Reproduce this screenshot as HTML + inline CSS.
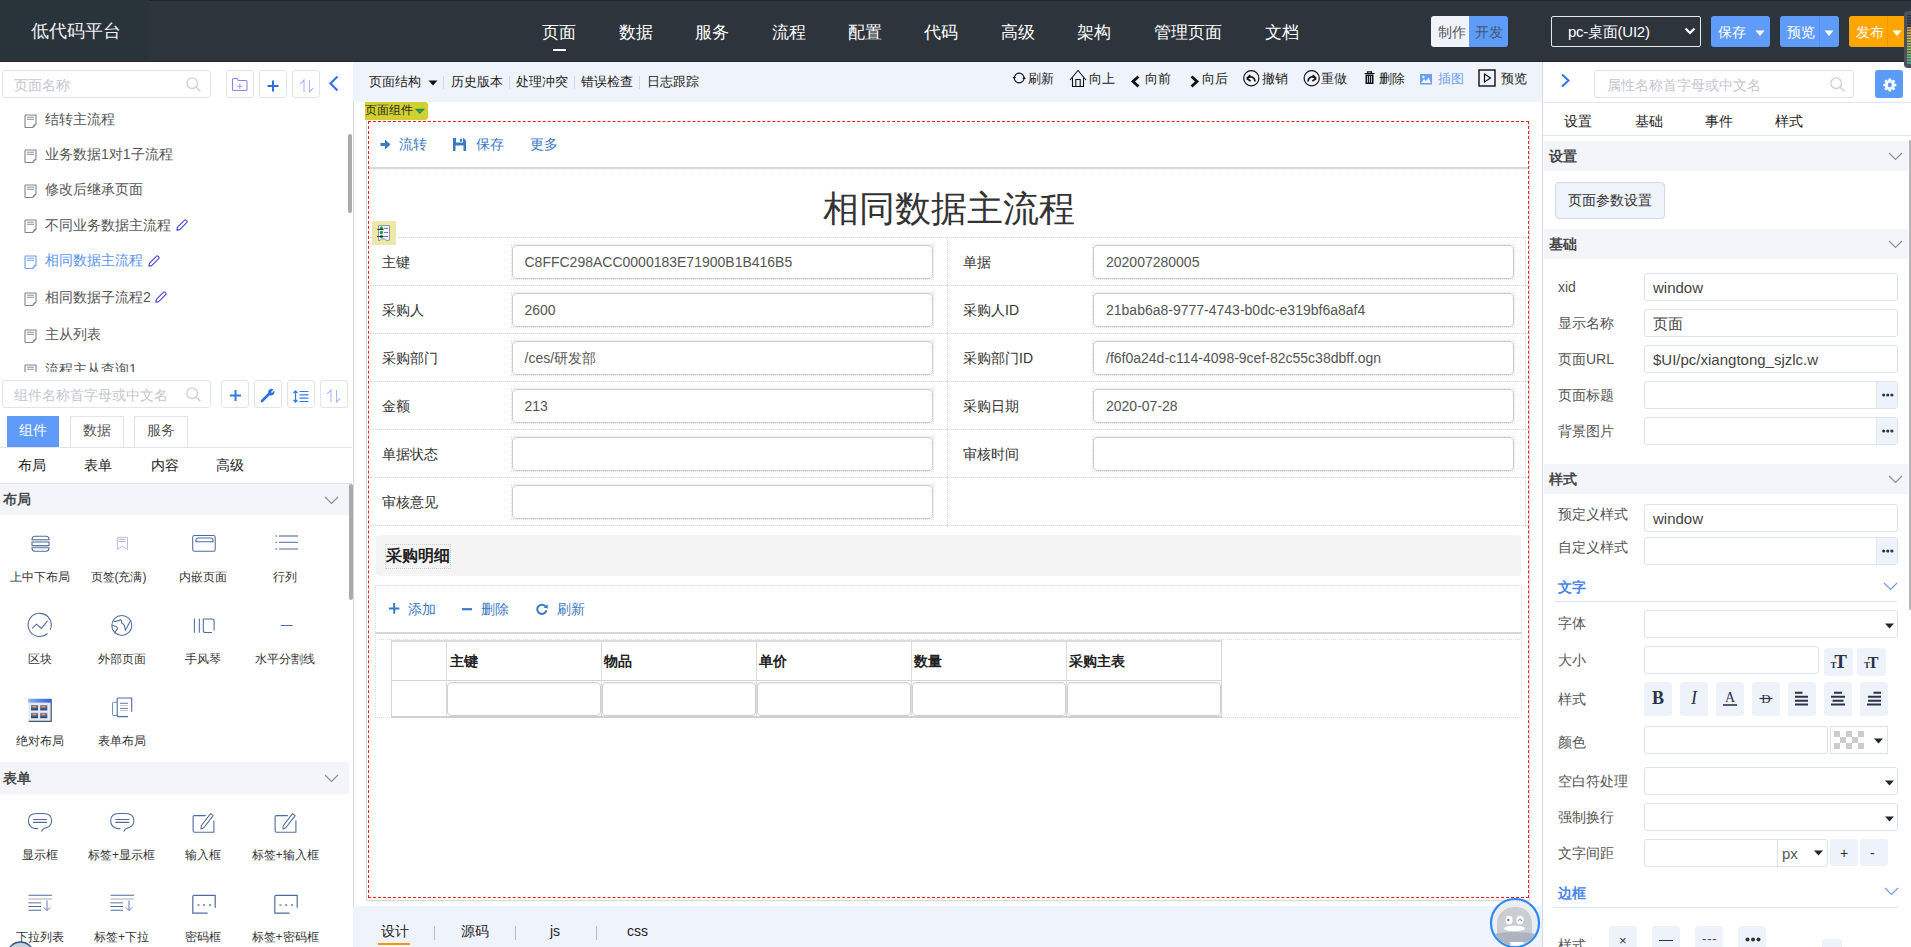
<!DOCTYPE html><html><head><meta charset="utf-8"><style>
*{box-sizing:border-box}
html,body{margin:0;padding:0;width:1911px;height:947px;overflow:hidden;background:#fff;font-family:"Liberation Sans",sans-serif}
.t{position:absolute;white-space:nowrap}
.r{position:absolute;display:block}
</style></head><body><div class="r" style="left:0px;top:0px;width:1911px;height:62px;background:#2e343b"></div>
<div class="r" style="left:0px;top:0px;width:149px;height:62px;background:#29333a"></div>
<div class="r" style="left:149px;top:0px;width:1762px;height:1px;background:#202328"></div>
<div class="r" style="left:0px;top:61px;width:1911px;height:1px;background:#23272e"></div>
<div class="t" style="left:31px;top:21.0px;font-size:18px;line-height:20px;color:#eef0f2;font-weight:normal;">低代码平台</div>
<div class="t" style="left:542px;top:22.5px;font-size:17px;line-height:20px;color:#ffffff;font-weight:normal;">页面</div>
<div class="t" style="left:619px;top:22.5px;font-size:17px;line-height:20px;color:#ffffff;font-weight:normal;">数据</div>
<div class="t" style="left:695px;top:22.5px;font-size:17px;line-height:20px;color:#ffffff;font-weight:normal;">服务</div>
<div class="t" style="left:772px;top:22.5px;font-size:17px;line-height:20px;color:#ffffff;font-weight:normal;">流程</div>
<div class="t" style="left:848px;top:22.5px;font-size:17px;line-height:20px;color:#ffffff;font-weight:normal;">配置</div>
<div class="t" style="left:924px;top:22.5px;font-size:17px;line-height:20px;color:#ffffff;font-weight:normal;">代码</div>
<div class="t" style="left:1001px;top:22.5px;font-size:17px;line-height:20px;color:#ffffff;font-weight:normal;">高级</div>
<div class="t" style="left:1077px;top:22.5px;font-size:17px;line-height:20px;color:#ffffff;font-weight:normal;">架构</div>
<div class="t" style="left:1154px;top:22.5px;font-size:17px;line-height:20px;color:#ffffff;font-weight:normal;">管理页面</div>
<div class="t" style="left:1265px;top:22.5px;font-size:17px;line-height:20px;color:#ffffff;font-weight:normal;">文档</div>
<div class="r" style="left:553px;top:49px;width:13px;height:2px;background:#ffffff"></div>
<div class="r" style="left:1431px;top:16px;width:38px;height:31px;background:#f0f3fa;border-radius:3px 0 0 3px"></div>
<div class="r" style="left:1469px;top:16px;width:39px;height:31px;background:#5f9cf9;border-radius:0 3px 3px 0"></div>
<div class="t" style="left:1438px;top:22.0px;font-size:14px;line-height:20px;color:#555;font-weight:normal;">制作</div>
<div class="t" style="left:1475px;top:22.0px;font-size:14px;line-height:20px;color:#3d5878;font-weight:normal;">开发</div>
<div class="r" style="left:1551px;top:16px;width:150px;height:31px;border:1px solid #e8e8e8;border-radius:2px"></div>
<div class="t" style="left:1568px;top:22.0px;font-size:15px;line-height:20px;color:#ffffff;font-weight:normal;letter-spacing:-0.25px">pc-桌面(UI2)</div>
<svg class="r" style="left:1684px;top:26px" width="12" height="10" viewBox="0 0 12 10"><path d="M1.5 2.5 L6 7 L10.5 2.5" stroke="#fff" stroke-width="2.2" fill="none"/></svg>
<div class="r" style="left:1711px;top:16px;width:59px;height:31px;background:#5f9cfa;border-radius:3px"></div>
<div class="t" style="left:1718px;top:22.0px;font-size:14px;line-height:20px;color:#ffffff;font-weight:normal;">保存</div>
<svg class="r" style="left:1755px;top:29.5px" width="10" height="6" viewBox="0 0 10 6"><path d="M0.5 0.5 L9.5 0.5 L5 6 Z" fill="#fff"/></svg>
<div class="r" style="left:1780px;top:16px;width:59px;height:31px;background:#5f9cfa;border-radius:3px"></div>
<div class="r" style="left:1819px;top:16px;width:1px;height:31px;background:rgba(0,0,0,0.07)"></div>
<div class="t" style="left:1787px;top:22.0px;font-size:14px;line-height:20px;color:#ffffff;font-weight:normal;">预览</div>
<svg class="r" style="left:1824px;top:29.5px" width="10" height="6" viewBox="0 0 10 6"><path d="M0.5 0.5 L9.5 0.5 L5 6 Z" fill="#fff"/></svg>
<div class="r" style="left:1849px;top:16px;width:62px;height:31px;background:#ffa500;border-radius:3px"></div>
<div class="r" style="left:1887px;top:16px;width:1px;height:31px;background:rgba(0,0,0,0.07)"></div>
<div class="t" style="left:1856px;top:22.0px;font-size:14px;line-height:20px;color:#ffffff;font-weight:normal;">发布</div>
<svg class="r" style="left:1892px;top:29.5px" width="10" height="6" viewBox="0 0 10 6"><path d="M0.5 0.5 L9.5 0.5 L5 6 Z" fill="#fff"/></svg>
<div class="r" style="left:1904px;top:11px;width:7px;height:57px;background:#4a505c;border-radius:4px 0 0 4px"></div>
<svg class="r" style="left:1906px;top:15px" width="5" height="50" viewBox="0 0 5 50"><rect x="0" y="0" width="5" height="48" fill="#5a5048"/><rect x="1" y="0" width="4" height="12" fill="#2e3440"/><rect x="1" y="12.0" width="4" height="1.4" fill="#e89a3a"/><rect x="1" y="14.7" width="4" height="1.4" fill="#e8b03a"/><rect x="1" y="17.4" width="4" height="1.4" fill="#e0c040"/><rect x="1" y="20.1" width="4" height="1.4" fill="#d8c848"/><rect x="1" y="22.8" width="4" height="1.4" fill="#d0cc50"/><rect x="1" y="25.5" width="4" height="1.4" fill="#c8d058"/><rect x="1" y="28.2" width="4" height="1.4" fill="#b8d060"/><rect x="1" y="30.9" width="4" height="1.4" fill="#a8d068"/><rect x="1" y="33.6" width="4" height="1.4" fill="#98d070"/><rect x="1" y="36.3" width="4" height="1.4" fill="#88d078"/><rect x="1" y="39.0" width="4" height="1.4" fill="#70d088"/><rect x="1" y="41.7" width="4" height="1.4" fill="#60d098"/><rect x="1" y="44.4" width="4" height="1.4" fill="#50d0a8"/><rect x="1" y="47.1" width="4" height="1.4" fill="#48c8b0"/><rect x="1" y="1.0" width="4" height="1.2" fill="#46505e"/><rect x="1" y="3.7" width="4" height="1.2" fill="#46505e"/><rect x="1" y="6.4" width="4" height="1.2" fill="#46505e"/><rect x="1" y="9.1" width="4" height="1.2" fill="#46505e"/></svg>
<div class="r" style="left:353px;top:62px;width:1px;height:885px;background:#d9d9d9"></div>
<div class="r" style="left:2px;top:70px;width:209px;height:28px;border:1px solid #dfe4ef;border-radius:3px;background:#fff"></div>
<div class="t" style="left:14px;top:74.5px;font-size:14px;line-height:20px;color:#c3c7cf;font-weight:normal;">页面名称</div>
<svg class="r" style="left:186px;top:77px" width="15" height="15" viewBox="0 0 15 15"><circle cx="6.2" cy="6.2" r="5.3" stroke="#cdd0d6" stroke-width="1.3" fill="none"/><path d="M10 10 L14 14" stroke="#cdd0d6" stroke-width="1.4" stroke-linecap="round"/></svg>
<div class="r" style="left:226px;top:70px;width:28px;height:28px;border:1px solid #dfe4ef;border-radius:3px;background:#fff"></div>
<div class="r" style="left:259px;top:70px;width:28px;height:28px;border:1px solid #dfe4ef;border-radius:3px;background:#fff"></div>
<div class="r" style="left:292px;top:70px;width:28px;height:28px;border:1px solid #dfe4ef;border-radius:3px;background:#fff"></div>
<svg class="r" style="left:231px;top:77px" width="18" height="15" viewBox="0 0 18 15"><path d="M1.5 2.5 Q1.5 1.5 2.5 1.5 H6 L7.5 3.5 H15 Q16 3.5 16 4.5 V12.5 Q16 13.5 15 13.5 H2.5 Q1.5 13.5 1.5 12.5 Z" stroke="#8a86ee" stroke-width="1.1" fill="none" stroke-linejoin="round"/><path d="M8.8 6.5 V12 M6 9.3 H11.5" stroke="#9c9cf0" stroke-width="1"/></svg>
<svg class="r" style="left:267px;top:80px" width="12" height="12" viewBox="0 0 12 12"><path d="M6 0.5 V11.5 M0.5 6 H11.5" stroke="#2e6fe0" stroke-width="2"/></svg>
<svg class="r" style="left:299px;top:79px" width="16" height="14" viewBox="0 0 16 14"><path d="M5 13 V1 L1.2 4.8" stroke="#a8b8f0" stroke-width="1.1" fill="none"/><path d="M10.5 1 V13 L14.3 9.2" stroke="#a8b8f0" stroke-width="1.1" fill="none"/></svg>
<svg class="r" style="left:328px;top:75px" width="12" height="17" viewBox="0 0 12 17"><path d="M9.5 1.5 L2.5 8.5 L9.5 15.5" stroke="#3a6fe6" stroke-width="2.2" fill="none"/></svg>
<svg class="r" style="left:23.5px;top:113.9px" width="14" height="15" viewBox="0 0 14 15"><path d="M1 1.5 Q1 1 1.5 1 H12 V10 L8.8 13.5 H1.5 Q1 13.5 1 13 Z" stroke="#7f838c" stroke-width="1.1" fill="none"/><path d="M3 3.2 H10 M3 5.3 H10" stroke="#7f838c" stroke-width="0.9"/><path d="M8.8 13.5 Q9 10.5 12 10" stroke="#7f838c" stroke-width="0.9" fill="none"/></svg>
<div class="t" style="left:45px;top:109.2px;font-size:14px;line-height:20px;color:#555;font-weight:normal;">结转主流程</div>
<svg class="r" style="left:23.5px;top:148.7px" width="14" height="15" viewBox="0 0 14 15"><path d="M1 1.5 Q1 1 1.5 1 H12 V10 L8.8 13.5 H1.5 Q1 13.5 1 13 Z" stroke="#7f838c" stroke-width="1.1" fill="none"/><path d="M3 3.2 H10 M3 5.3 H10" stroke="#7f838c" stroke-width="0.9"/><path d="M8.8 13.5 Q9 10.5 12 10" stroke="#7f838c" stroke-width="0.9" fill="none"/></svg>
<div class="t" style="left:45px;top:144.0px;font-size:14px;line-height:20px;color:#555;font-weight:normal;">业务数据1对1子流程</div>
<svg class="r" style="left:23.5px;top:183.5px" width="14" height="15" viewBox="0 0 14 15"><path d="M1 1.5 Q1 1 1.5 1 H12 V10 L8.8 13.5 H1.5 Q1 13.5 1 13 Z" stroke="#7f838c" stroke-width="1.1" fill="none"/><path d="M3 3.2 H10 M3 5.3 H10" stroke="#7f838c" stroke-width="0.9"/><path d="M8.8 13.5 Q9 10.5 12 10" stroke="#7f838c" stroke-width="0.9" fill="none"/></svg>
<div class="t" style="left:45px;top:178.8px;font-size:14px;line-height:20px;color:#555;font-weight:normal;">修改后继承页面</div>
<svg class="r" style="left:23.5px;top:219.2px" width="14" height="15" viewBox="0 0 14 15"><path d="M1 1.5 Q1 1 1.5 1 H12 V10 L8.8 13.5 H1.5 Q1 13.5 1 13 Z" stroke="#7f838c" stroke-width="1.1" fill="none"/><path d="M3 3.2 H10 M3 5.3 H10" stroke="#7f838c" stroke-width="0.9"/><path d="M8.8 13.5 Q9 10.5 12 10" stroke="#7f838c" stroke-width="0.9" fill="none"/></svg>
<div class="t" style="left:45px;top:214.5px;font-size:14px;line-height:20px;color:#555;font-weight:normal;">不同业务数据主流程</div>
<svg class="r" style="left:175.5px;top:219px" width="12" height="12" viewBox="0 0 12 12"><path d="M0.9 11.1 L1.4 8.3 L8.6 1.1 Q9.2 0.5 9.8 1.1 L10.9 2.2 Q11.5 2.8 10.9 3.4 L3.7 10.6 Z" stroke="#4545dc" stroke-width="1.1" fill="none" stroke-linejoin="round"/></svg>
<svg class="r" style="left:23.5px;top:255.09999999999997px" width="14" height="15" viewBox="0 0 14 15"><path d="M1 1.5 Q1 1 1.5 1 H12 V10 L8.8 13.5 H1.5 Q1 13.5 1 13 Z" stroke="#6c9cf5" stroke-width="1.1" fill="none"/><path d="M3 3.2 H10 M3 5.3 H10" stroke="#6c9cf5" stroke-width="0.9"/><path d="M8.8 13.5 Q9 10.5 12 10" stroke="#6c9cf5" stroke-width="0.9" fill="none"/></svg>
<div class="t" style="left:45px;top:250.39999999999998px;font-size:14px;line-height:20px;color:#5b94f1;font-weight:normal;">相同数据主流程</div>
<svg class="r" style="left:147.5px;top:254.89999999999998px" width="12" height="12" viewBox="0 0 12 12"><path d="M0.9 11.1 L1.4 8.3 L8.6 1.1 Q9.2 0.5 9.8 1.1 L10.9 2.2 Q11.5 2.8 10.9 3.4 L3.7 10.6 Z" stroke="#4545dc" stroke-width="1.1" fill="none" stroke-linejoin="round"/></svg>
<svg class="r" style="left:23.5px;top:291.59999999999997px" width="14" height="15" viewBox="0 0 14 15"><path d="M1 1.5 Q1 1 1.5 1 H12 V10 L8.8 13.5 H1.5 Q1 13.5 1 13 Z" stroke="#7f838c" stroke-width="1.1" fill="none"/><path d="M3 3.2 H10 M3 5.3 H10" stroke="#7f838c" stroke-width="0.9"/><path d="M8.8 13.5 Q9 10.5 12 10" stroke="#7f838c" stroke-width="0.9" fill="none"/></svg>
<div class="t" style="left:45px;top:286.9px;font-size:14px;line-height:20px;color:#555;font-weight:normal;">相同数据子流程2</div>
<svg class="r" style="left:155.2px;top:291.4px" width="12" height="12" viewBox="0 0 12 12"><path d="M0.9 11.1 L1.4 8.3 L8.6 1.1 Q9.2 0.5 9.8 1.1 L10.9 2.2 Q11.5 2.8 10.9 3.4 L3.7 10.6 Z" stroke="#4545dc" stroke-width="1.1" fill="none" stroke-linejoin="round"/></svg>
<svg class="r" style="left:23.5px;top:328.5px" width="14" height="15" viewBox="0 0 14 15"><path d="M1 1.5 Q1 1 1.5 1 H12 V10 L8.8 13.5 H1.5 Q1 13.5 1 13 Z" stroke="#7f838c" stroke-width="1.1" fill="none"/><path d="M3 3.2 H10 M3 5.3 H10" stroke="#7f838c" stroke-width="0.9"/><path d="M8.8 13.5 Q9 10.5 12 10" stroke="#7f838c" stroke-width="0.9" fill="none"/></svg>
<div class="t" style="left:45px;top:323.8px;font-size:14px;line-height:20px;color:#555;font-weight:normal;">主从列表</div>
<svg class="r" style="left:23.5px;top:363.5px" width="14" height="15" viewBox="0 0 14 15"><path d="M1 1.5 Q1 1 1.5 1 H12 V10 L8.8 13.5 H1.5 Q1 13.5 1 13 Z" stroke="#7f838c" stroke-width="1.1" fill="none"/><path d="M3 3.2 H10 M3 5.3 H10" stroke="#7f838c" stroke-width="0.9"/><path d="M8.8 13.5 Q9 10.5 12 10" stroke="#7f838c" stroke-width="0.9" fill="none"/></svg>
<div class="t" style="left:45px;top:358.8px;font-size:14px;line-height:20px;color:#555;font-weight:normal;">流程主从查询1</div>
<div class="r" style="left:0px;top:372px;width:352px;height:8px;background:#fff"></div>
<div class="r" style="left:348px;top:134px;width:4px;height:79px;background:#aaaaaa;border-radius:2px"></div>
<div class="r" style="left:2px;top:380px;width:209px;height:28px;border:1px solid #dfe4ef;border-radius:3px;background:#fff"></div>
<div class="t" style="left:14px;top:384.5px;font-size:14px;line-height:20px;color:#c3c7cf;font-weight:normal;">组件名称首字母或中文名</div>
<svg class="r" style="left:186px;top:387px" width="15" height="15" viewBox="0 0 15 15"><circle cx="6.2" cy="6.2" r="5.3" stroke="#cdd0d6" stroke-width="1.3" fill="none"/><path d="M10 10 L14 14" stroke="#cdd0d6" stroke-width="1.4" stroke-linecap="round"/></svg>
<div class="r" style="left:221px;top:380px;width:28px;height:28px;border:1px solid #dfe4ef;border-radius:3px;background:#fff"></div>
<div class="r" style="left:254px;top:380px;width:28px;height:28px;border:1px solid #dfe4ef;border-radius:3px;background:#fff"></div>
<div class="r" style="left:287px;top:380px;width:28px;height:28px;border:1px solid #dfe4ef;border-radius:3px;background:#fff"></div>
<div class="r" style="left:320px;top:380px;width:28px;height:28px;border:1px solid #dfe4ef;border-radius:3px;background:#fff"></div>
<svg class="r" style="left:230px;top:390px" width="11" height="11" viewBox="0 0 11 11"><path d="M5.5 0 V11 M0 5.5 H11" stroke="#3478ee" stroke-width="2"/></svg>
<svg class="r" style="left:260px;top:386.5px" width="16" height="16" viewBox="0 0 16 16"><path d="M2 14 L9 7" stroke="#2e6fe0" stroke-width="2.6" stroke-linecap="round"/><path d="M8.5 3.5 A3.5 3.5 0 0 1 13.5 2.5 L11 5 L12 6 L14.3 3.6 A3.5 3.5 0 0 1 12 8.2 A3.5 3.5 0 0 1 8 7 Z" fill="#2e6fe0"/></svg>
<svg class="r" style="left:293px;top:390px" width="17" height="13" viewBox="0 0 17 13"><path d="M2.5 1 V12 M0.5 3 L2.5 1 L4.5 3 M0.5 10 L2.5 12 L4.5 10" stroke="#3478ee" stroke-width="1.3" fill="none"/><path d="M6.5 1.5 H15.5 M6.5 4.8 H15.5 M6.5 8.1 H15.5 M6.5 11.5 H15.5" stroke="#3478ee" stroke-width="1.2"/></svg>
<svg class="r" style="left:326px;top:389px" width="16" height="14" viewBox="0 0 16 14"><path d="M5 13 V1 L1.2 4.8" stroke="#a8b8f0" stroke-width="1.1" fill="none"/><path d="M10.5 1 V13 L14.3 9.2" stroke="#a8b8f0" stroke-width="1.1" fill="none"/></svg>
<div class="r" style="left:7px;top:416px;width:52px;height:32px;background:#5e9bf8"></div>
<div class="t" style="left:19px;top:420.0px;font-size:14px;line-height:20px;color:#ffffff;font-weight:normal;">组件</div>
<div class="r" style="left:70px;top:416px;width:54px;height:32px;border:1px solid #dfe4ef;border-bottom:none;background:#fff"></div>
<div class="t" style="left:83px;top:420.0px;font-size:14px;line-height:20px;color:#555;font-weight:normal;">数据</div>
<div class="r" style="left:134px;top:416px;width:54px;height:32px;border:1px solid #dfe4ef;border-bottom:none;background:#fff"></div>
<div class="t" style="left:147px;top:420.0px;font-size:14px;line-height:20px;color:#555;font-weight:normal;">服务</div>
<div class="r" style="left:0px;top:447px;width:352px;height:1px;background:#dfe4ef"></div>
<div class="t" style="left:18px;top:454.5px;font-size:14px;line-height:20px;color:#222;font-weight:normal;">布局</div>
<div class="t" style="left:84px;top:454.5px;font-size:14px;line-height:20px;color:#222;font-weight:normal;">表单</div>
<div class="t" style="left:151px;top:454.5px;font-size:14px;line-height:20px;color:#222;font-weight:normal;">内容</div>
<div class="t" style="left:216px;top:454.5px;font-size:14px;line-height:20px;color:#222;font-weight:normal;">高级</div>
<div class="r" style="left:0px;top:483px;width:352px;height:1px;background:#dfe4ef"></div>
<div class="r" style="left:0px;top:484px;width:349px;height:31px;background:#f3f5fa"></div>
<div class="t" style="left:3px;top:489.0px;font-size:14px;line-height:20px;color:#4a4a4a;font-weight:bold;">布局</div>
<svg class="r" style="left:324px;top:495.5px" width="15" height="9" viewBox="0 0 15 9"><path d="M1 1 L7.5 7.5 L14 1" stroke="#8a8f99" stroke-width="1.2" fill="none"/></svg>
<div class="r" style="left:0px;top:762px;width:349px;height:32px;background:#f3f5fa"></div>
<div class="t" style="left:3px;top:767.5px;font-size:14px;line-height:20px;color:#4a4a4a;font-weight:bold;">表单</div>
<svg class="r" style="left:324px;top:774.0px" width="15" height="9" viewBox="0 0 15 9"><path d="M1 1 L7.5 7.5 L14 1" stroke="#8a8f99" stroke-width="1.2" fill="none"/></svg>
<div class="r" style="left:349px;top:484px;width:4px;height:116px;background:#aaaaaa;border-radius:2px"></div>
<svg class="r" style="left:28px;top:533px" width="26" height="22" viewBox="28 533 26 22"><path d="M35 536.3 H46 Q49 536.3 49 539.3 V539.8 H32 V539.3 Q32 536.3 35 536.3 Z" stroke="#4f6c9e" stroke-width="1.05" fill="none"/><rect x="32" y="542" width="17" height="3.6" stroke="#4f6c9e" stroke-width="1.05" fill="none"/><path d="M32 547.8 H49 V548.3 Q49 551.2 46 551.2 H35 Q32 551.2 32 548.3 Z" stroke="#4f6c9e" stroke-width="1.05" fill="none"/><path d="M32.5 540.9 H48.5 M32.5 546.7 H48.5" stroke="#b4bac6" stroke-width="0.9"/></svg>
<div class="t" style="left:10.0px;top:566.7px;font-size:12px;line-height:20px;color:#333;font-weight:normal;">上中下布局</div>
<svg class="r" style="left:114px;top:534px" width="17" height="19" viewBox="114 534 17 19"><path d="M117.4 537.3 H127.5 V549.6 L122.4 545.9 L117.4 549.6 Z" stroke="#b2b6dc" stroke-width="0.9" fill="none"/><path d="M119.2 539.3 H125.6 M119.2 541.5 H125.6" stroke="#a6aac6" stroke-width="0.9"/></svg>
<div class="t" style="left:90.5px;top:566.7px;font-size:12px;line-height:20px;color:#333;font-weight:normal;">页签(充满)</div>
<svg class="r" style="left:189px;top:532px" width="30" height="23" viewBox="189 532 30 23"><rect x="192.7" y="535.5" width="22.5" height="15.8" rx="1.8" stroke="#4f6c9e" stroke-width="1.05" fill="none"/><path d="M196 541.8 V540 Q196 538 198.5 538 H210.5 Q213 538 213 540 V541.8 Z" stroke="#4f6c9e" stroke-width="1.05" fill="none"/></svg>
<div class="t" style="left:179.0px;top:566.7px;font-size:12px;line-height:20px;color:#333;font-weight:normal;">内嵌页面</div>
<svg class="r" style="left:273px;top:532px" width="28" height="21" viewBox="273 532 28 21"><path d="M275.3 536 H277.2 M279 536 H298 M275.3 542.3 H277.2 M279 542.3 H298 M275.3 549 H277.2 M279 549 H298" stroke="#4f6c9e" stroke-width="1"/><path d="M279 536 H298" stroke="#9aa4b8" stroke-width="1"/></svg>
<div class="t" style="left:273.0px;top:566.7px;font-size:12px;line-height:20px;color:#333;font-weight:normal;">行列</div>
<svg class="r" style="left:26px;top:611px" width="29" height="29" viewBox="26 611 29 29"><path d="M47.5 633.5 A11.6 11.6 0 1 1 50.2 629.8" stroke="#4f6c9e" stroke-width="1.05" fill="none"/><path d="M32.2 628.4 L36.5 624.1 L41.4 628.4 L47.5 620.9" stroke="#4f6c9e" stroke-width="1.05" fill="none"/></svg>
<div class="t" style="left:28.0px;top:649.2px;font-size:12px;line-height:20px;color:#333;font-weight:normal;">区块</div>
<svg class="r" style="left:109px;top:612px" width="26" height="27" viewBox="109 612 26 27"><circle cx="121.8" cy="625.4" r="10" stroke="#4f6c9e" stroke-width="1.05" fill="none"/><path d="M112.2 625.3 L116.4 626.6 L117.6 628.6 L115.4 631.4 L114.6 633.6" stroke="#4f6c9e" stroke-width="1.05" fill="none"/><path d="M113.6 621 Q115.5 622.3 117 620.6 Q118.6 621.5 120.5 619.6 Q122.5 621 121.5 622.9 Q123.6 624 124.4 625.6 Q125.2 628 125.3 630.2 Q126.6 628.5 128.3 624.8 Q129.6 622 131.2 620.4" stroke="#4f6c9e" stroke-width="1.05" fill="none"/></svg>
<div class="t" style="left:97.5px;top:649.2px;font-size:12px;line-height:20px;color:#333;font-weight:normal;">外部页面</div>
<svg class="r" style="left:191px;top:615px" width="27" height="21" viewBox="191 615 27 21"><path d="M194.4 618.6 V632.7 M199.3 618.6 V632.7" stroke="#4f6c9e" stroke-width="1.05" fill="none"/><path d="M212 632.5 H205.4 Q203.3 632.5 203.3 630.4 V618.9 H212 Q214.1 618.9 214.1 621 V630.5" stroke="#4f6c9e" stroke-width="1.05" fill="none"/></svg>
<div class="t" style="left:185.0px;top:649.2px;font-size:12px;line-height:20px;color:#333;font-weight:normal;">手风琴</div>
<svg class="r" style="left:278px;top:622px" width="18" height="7" viewBox="278 622 18 7"><path d="M280.7 625.5 H292.7" stroke="#4f6c9e" stroke-width="1"/></svg>
<div class="t" style="left:255.0px;top:649.2px;font-size:12px;line-height:20px;color:#333;font-weight:normal;">水平分割线</div>
<svg class="r" style="left:27px;top:697px" width="27" height="27" viewBox="27 697 27 27"><defs><linearGradient id="tg" x1="0" y1="0" x2="1" y2="0"><stop offset="0" stop-color="#8ab0f0"/><stop offset="1" stop-color="#2a5ee0"/></linearGradient><linearGradient id="cg" x1="0" y1="0" x2="0" y2="1"><stop offset="0" stop-color="#7a8cb0"/><stop offset="1" stop-color="#2a3c70"/></linearGradient></defs><rect x="28.3" y="698.8" width="23.4" height="22.5" fill="#e6eaf2"/><path d="M51.2 702 V721.3 H28.8" stroke="#445470" stroke-width="1.2" fill="none"/><rect x="28.3" y="698.8" width="23.4" height="3.8" fill="url(#tg)"/><rect x="31" y="705" width="7.1" height="5.4" fill="url(#cg)"/><rect x="40.2" y="705" width="7.1" height="5.4" fill="url(#cg)"/><rect x="31" y="712.8" width="7.1" height="5.4" fill="url(#cg)"/><rect x="40.2" y="712.8" width="7.1" height="5.4" fill="url(#cg)"/><rect x="32.5" y="706" width="3.5" height="1.6" fill="#f09050"/><rect x="41.7" y="706" width="3.5" height="1.6" fill="#f09050"/><rect x="32.5" y="713.8" width="3.5" height="1.6" fill="#f09050"/><rect x="41.7" y="713.8" width="3.5" height="1.6" fill="#f09050"/></svg>
<div class="t" style="left:16.0px;top:730.7px;font-size:12px;line-height:20px;color:#333;font-weight:normal;">绝对布局</div>
<svg class="r" style="left:110px;top:695px" width="25" height="24" viewBox="110 695 25 24"><path d="M117 702.2 H113.3 Q112.6 702.2 112.6 703 V714.8 Q112.6 715.5 113.3 715.5 H117" stroke="#6a88b8" stroke-width="1" fill="none"/><path d="M128 716.6 H118.2 Q117.2 716.6 117.2 715.6 V699 Q117.2 698 118.2 698 H131.7 V711.8" stroke="#4f6c9e" stroke-width="1.1" fill="none"/><path d="M120 703.3 H128 M120 708.4 H128" stroke="#4f6c9e" stroke-width="0.9"/><path d="M120 705.5 H128 M120 710.5 H128" stroke="#b8bccc" stroke-width="0.9"/></svg>
<div class="t" style="left:97.5px;top:730.7px;font-size:12px;line-height:20px;color:#333;font-weight:normal;">表单布局</div>
<svg class="r" style="left:26px;top:811px" width="110" height="23" viewBox="26 811 110 23"><g transform="translate(0,0)"><path d="M38 828.6 Q35 828.8 32 827.4 Q28.4 825.3 28.4 820.8 Q28.4 813.5 36.5 813.5 H43.5 Q51.6 813.5 51.6 820.8 Q51.6 825.5 47 827.6 Q45.5 828.3 44 828.4 Q42.5 829.2 41.4 831.6" stroke="#4f6c9e" stroke-width="1.1" fill="none"/><path d="M33.1 819.5 H46.9 M33.1 822.4 H46.9" stroke="#4f6c9e" stroke-width="1.1"/></g><g transform="translate(82.3,0)"><path d="M38 828.6 Q35 828.8 32 827.4 Q28.4 825.3 28.4 820.8 Q28.4 813.5 36.5 813.5 H43.5 Q51.6 813.5 51.6 820.8 Q51.6 825.5 47 827.6 Q45.5 828.3 44 828.4 Q42.5 829.2 41.4 831.6" stroke="#4f6c9e" stroke-width="1.1" fill="none"/><path d="M33.1 819.5 H46.9 M33.1 822.4 H46.9" stroke="#4f6c9e" stroke-width="1.1"/></g></svg>
<div class="t" style="left:22.0px;top:845.2px;font-size:12px;line-height:20px;color:#333;font-weight:normal;">显示框</div>
<div class="t" style="left:88.0px;top:845.2px;font-size:12px;line-height:20px;color:#333;font-weight:normal;">标签+显示框</div>
<svg class="r" style="left:190px;top:811px" width="110" height="23" viewBox="190 811 110 23"><g transform="translate(0,0)"><path d="M205.8 815.6 H194.3 Q193.1 815.6 193.1 816.8 V830.8 Q193.1 832.2 194.6 832.2 H213.9 V820.6" stroke="#4f6c9e" stroke-width="1.1" fill="none"/><path d="M201 829 L201.2 825.8 L210.6 813.6 L213.2 815.6 L203.8 827.8 Z" stroke="#4f6c9e" stroke-width="1.05" fill="none" stroke-linejoin="round"/></g><g transform="translate(82,0)"><path d="M205.8 815.6 H194.3 Q193.1 815.6 193.1 816.8 V830.8 Q193.1 832.2 194.6 832.2 H213.9 V820.6" stroke="#4f6c9e" stroke-width="1.1" fill="none"/><path d="M201 829 L201.2 825.8 L210.6 813.6 L213.2 815.6 L203.8 827.8 Z" stroke="#4f6c9e" stroke-width="1.05" fill="none" stroke-linejoin="round"/></g></svg>
<div class="t" style="left:185.0px;top:845.2px;font-size:12px;line-height:20px;color:#333;font-weight:normal;">输入框</div>
<div class="t" style="left:251.5px;top:845.2px;font-size:12px;line-height:20px;color:#333;font-weight:normal;">标签+输入框</div>
<svg class="r" style="left:26px;top:892px" width="110" height="22" viewBox="26 892 110 22"><g transform="translate(0,0)"><path d="M28.5 895.3 H52 M28.5 902.7 H41 M28.5 906.5 H41 M28.5 910.3 H41" stroke="#4f6c9e" stroke-width="1.05"/><path d="M28.5 899 H52 M28.5 902.7 H41" stroke="#a4acbc" stroke-width="1.05"/><path d="M47 900.5 V910.5 M43.8 907.3 L47 910.6 L50.2 907.3" stroke="#6a78c0" stroke-width="1" fill="none"/></g><g transform="translate(82,0)"><path d="M28.5 895.3 H52 M28.5 902.7 H41 M28.5 906.5 H41 M28.5 910.3 H41" stroke="#4f6c9e" stroke-width="1.05"/><path d="M28.5 899 H52 M28.5 902.7 H41" stroke="#a4acbc" stroke-width="1.05"/><path d="M47 900.5 V910.5 M43.8 907.3 L47 910.6 L50.2 907.3" stroke="#6a78c0" stroke-width="1" fill="none"/></g></svg>
<div class="t" style="left:16.0px;top:926.7px;font-size:12px;line-height:20px;color:#333;font-weight:normal;">下拉列表</div>
<div class="t" style="left:94.0px;top:926.7px;font-size:12px;line-height:20px;color:#333;font-weight:normal;">标签+下拉</div>
<svg class="r" style="left:190px;top:892px" width="110" height="24" viewBox="190 892 110 24"><g transform="translate(0,0)"><path d="M207.6 913.2 H192.8 V896.8 Q192.8 895.4 194.2 895.4 H215.2 V907.8" stroke="#4f6c9e" stroke-width="1.2" fill="none"/><path d="M197.6 904.1 L199.4 905.9 M199.4 904.1 L197.6 905.9 M203.2 904.1 L205 905.9 M205 904.1 L203.2 905.9 M209.2 904.1 L211 905.9 M211 904.1 L209.2 905.9" stroke="#4f6c9e" stroke-width="0.8"/></g><g transform="translate(82,0)"><path d="M207.6 913.2 H192.8 V896.8 Q192.8 895.4 194.2 895.4 H215.2 V907.8" stroke="#4f6c9e" stroke-width="1.2" fill="none"/><path d="M197.6 904.1 L199.4 905.9 M199.4 904.1 L197.6 905.9 M203.2 904.1 L205 905.9 M205 904.1 L203.2 905.9 M209.2 904.1 L211 905.9 M211 904.1 L209.2 905.9" stroke="#4f6c9e" stroke-width="0.8"/></g></svg>
<div class="t" style="left:185.0px;top:926.7px;font-size:12px;line-height:20px;color:#333;font-weight:normal;">密码框</div>
<div class="t" style="left:251.5px;top:926.7px;font-size:12px;line-height:20px;color:#333;font-weight:normal;">标签+密码框</div>
<svg class="r" style="left:5px;top:940px" width="31" height="7" viewBox="5 940 31 7"><ellipse cx="20.5" cy="952" rx="12" ry="10" fill="#c8d0da" stroke="#2f5a8a" stroke-width="1.3"/></svg>
<div class="r" style="left:353px;top:62px;width:1190px;height:40px;background:#eff3fb"></div>
<div class="t" style="left:369px;top:71.9px;font-size:13px;line-height:20px;color:#222;font-weight:normal;">页面结构</div>
<svg class="r" style="left:428px;top:79.6px" width="10" height="6" viewBox="0 0 10 6"><path d="M0.5 0.5 H9.5 L5 5.5 Z" fill="#111"/></svg>
<div class="r" style="left:443px;top:76px;width:1px;height:13px;background:#d5d9e0"></div>
<div class="r" style="left:509px;top:76px;width:1px;height:13px;background:#d5d9e0"></div>
<div class="r" style="left:574px;top:76px;width:1px;height:13px;background:#d5d9e0"></div>
<div class="r" style="left:639px;top:76px;width:1px;height:13px;background:#d5d9e0"></div>
<div class="t" style="left:451px;top:71.9px;font-size:13px;line-height:20px;color:#222;font-weight:normal;">历史版本</div>
<div class="t" style="left:516px;top:71.9px;font-size:13px;line-height:20px;color:#222;font-weight:normal;">处理冲突</div>
<div class="t" style="left:581px;top:71.9px;font-size:13px;line-height:20px;color:#222;font-weight:normal;">错误检查</div>
<div class="t" style="left:647px;top:71.9px;font-size:13px;line-height:20px;color:#222;font-weight:normal;">日志跟踪</div>
<svg class="r" style="left:1012px;top:72px" width="15" height="12" viewBox="0 0 15 12"><circle cx="7.2" cy="6" r="4.9" stroke="#111" stroke-width="1.1" fill="none"/><path d="M0.5 5 L2.3 7.2 L4.1 5 Z M10.3 7 L12.1 4.8 L13.9 7 Z" fill="#111"/></svg>
<div class="t" style="left:1028px;top:68.8px;font-size:13px;line-height:20px;color:#222;font-weight:normal;">刷新</div>
<svg class="r" style="left:1069px;top:69px" width="18" height="19" viewBox="0 0 18 19"><path d="M1 11 L9 1.5 L17 11" stroke="#111" stroke-width="1.1" fill="none"/><path d="M3.5 8.5 V17.5 H14.5 V8.5 M6.8 17.5 V10.5 H11.2 V17.5" stroke="#111" stroke-width="1.1" fill="none"/></svg>
<div class="t" style="left:1088.5px;top:68.8px;font-size:13px;line-height:20px;color:#222;font-weight:normal;">向上</div>
<svg class="r" style="left:1130px;top:75px" width="11" height="13" viewBox="0 0 11 13"><path d="M8.5 1.5 L3 6.5 L8.5 11.5" stroke="#111" stroke-width="2.8" fill="none"/></svg>
<div class="t" style="left:1145px;top:68.8px;font-size:13px;line-height:20px;color:#222;font-weight:normal;">向前</div>
<svg class="r" style="left:1189px;top:75px" width="11" height="13" viewBox="0 0 11 13"><path d="M2.5 1.5 L8 6.5 L2.5 11.5" stroke="#111" stroke-width="2.8" fill="none"/></svg>
<div class="t" style="left:1202px;top:68.8px;font-size:13px;line-height:20px;color:#222;font-weight:normal;">向后</div>
<svg class="r" style="left:1243px;top:69px" width="17" height="18" viewBox="0 0 17 18"><g ><circle cx="8.3" cy="9.2" r="7.6" stroke="#111" stroke-width="1.2" fill="none"/><path d="M4.3 9.3 C7 7 11.5 7 12 12.5" stroke="#111" stroke-width="1.6" fill="none"/><path d="M3.8 9.5 L7.2 6 M3.8 9.5 L7.6 12" stroke="#111" stroke-width="1.6" fill="none"/></g></svg>
<div class="t" style="left:1262px;top:68.8px;font-size:13px;line-height:20px;color:#222;font-weight:normal;">撤销</div>
<svg class="r" style="left:1303px;top:69px" width="17" height="18" viewBox="0 0 17 18"><g transform="translate(17,0) scale(-1,1)"><circle cx="8.3" cy="9.2" r="7.6" stroke="#111" stroke-width="1.2" fill="none"/><path d="M4.3 9.3 C7 7 11.5 7 12 12.5" stroke="#111" stroke-width="1.6" fill="none"/><path d="M3.8 9.5 L7.2 6 M3.8 9.5 L7.6 12" stroke="#111" stroke-width="1.6" fill="none"/></g></svg>
<div class="t" style="left:1321px;top:68.8px;font-size:13px;line-height:20px;color:#222;font-weight:normal;">重做</div>
<svg class="r" style="left:1364px;top:71px" width="11" height="14" viewBox="0 0 11 14"><path d="M0.5 2.5 H10.5 M3.5 2.5 V0.8 H7.5 V2.5" stroke="#111" stroke-width="1.2" fill="none"/><path d="M1.5 3.5 H9.5 V13 H1.5 Z" fill="#111"/><path d="M3.5 5 V11.5 M5.5 5 V11.5 M7.5 5 V11.5" stroke="#eff3fb" stroke-width="0.8"/></svg>
<div class="t" style="left:1379px;top:68.8px;font-size:13px;line-height:20px;color:#222;font-weight:normal;">删除</div>
<svg class="r" style="left:1420px;top:74px" width="12" height="11" viewBox="0 0 12 11"><rect x="0" y="0" width="12" height="10.5" fill="#6aa0f2"/><path d="M1 9 L4 5 L6 7 L8.5 3.5 L11 9 Z" fill="#eff3fb"/><circle cx="3.5" cy="3" r="1.2" fill="#eff3fb"/></svg>
<div class="t" style="left:1437.5px;top:68.8px;font-size:13px;line-height:20px;color:#6fa2f2;font-weight:normal;">插图</div>
<svg class="r" style="left:1478px;top:69px" width="18" height="18" viewBox="0 0 18 18"><rect x="1" y="1" width="16" height="16" stroke="#111" stroke-width="1.4" fill="none"/><path d="M6.5 5 L12.5 9 L6.5 13 Z" stroke="#111" stroke-width="1.2" fill="none"/></svg>
<div class="t" style="left:1501px;top:68.8px;font-size:13px;line-height:20px;color:#222;font-weight:normal;">预览</div>
<div class="r" style="left:365px;top:102px;width:63px;height:18px;background:#d0d030;border-radius:0 3px 3px 0"></div>
<div class="t" style="left:365px;top:100.0px;font-size:12px;line-height:20px;color:#2a2a1a;font-weight:normal;">页面组件</div>
<svg class="r" style="left:414px;top:108px" width="12" height="7" viewBox="0 0 12 7"><path d="M0.8 0.8 H11 L5.9 6 Z" fill="#1e9040"/><path d="M4 2.5 H7.8 L5.9 4.6 Z" fill="#52b060"/></svg>
<div class="r" style="left:366px;top:121px;width:1164px;height:780px;border-left:1px solid #d8d8d8;border-right:1px solid #e0e0e0;border-bottom:1px solid #d8d8d8"></div>
<div class="r" style="left:368px;top:121px;width:1161px;height:777px;border:1px dashed #ff1a1a"></div>
<svg class="r" style="left:380px;top:139px" width="11" height="11" viewBox="0 0 11 11"><path d="M0.5 4 H5 V0.5 L10.5 5.5 L5 10.5 V7 H0.5 Z" fill="#3a7bc2"/></svg>
<div class="t" style="left:399px;top:133.5px;font-size:14px;line-height:20px;color:#3a7bc2;font-weight:normal;">流转</div>
<svg class="r" style="left:453px;top:138px" width="13" height="13" viewBox="0 0 13 13"><path d="M0 0 H10.5 L13 2.5 V13 H0 Z" fill="#3a7bc2"/><rect x="3" y="0" width="7" height="4.5" fill="#fff"/><rect x="7" y="0.7" width="2" height="3" fill="#3a7bc2"/><rect x="2.5" y="7.5" width="8" height="5.5" fill="#fff"/></svg>
<div class="t" style="left:476px;top:133.5px;font-size:14px;line-height:20px;color:#3a7bc2;font-weight:normal;">保存</div>
<div class="t" style="left:530px;top:133.5px;font-size:14px;line-height:20px;color:#3a7bc2;font-weight:normal;">更多</div>
<div class="r" style="left:369px;top:167px;width:1159px;height:2px;background:#d9d9d9"></div>
<div class="r" style="left:369px;top:169px;width:1159px;height:1px;border-top:1px dotted #e8e8e8"></div>
<div class="t" style="left:823px;top:186.5px;font-size:36px;line-height:44px;color:#333;font-weight:normal;">相同数据主流程</div>
<div class="r" style="left:370px;top:237px;width:1158px;height:1px;border-top:1px dotted #d6d6d6"></div>
<div class="r" style="left:511px;top:244px;width:423px;height:36px;border:1px dotted #e2e2e2"></div>
<div class="r" style="left:512px;top:245px;width:421px;height:34px;border:1px solid #cccccc;border-radius:4px;background:#fff"></div>
<div class="t" style="left:382px;top:251.5px;font-size:14px;line-height:20px;color:#333;font-weight:normal;">主键</div>
<div class="t" style="left:524.5px;top:251.5px;font-size:14px;line-height:20px;color:#555;font-weight:normal;">C8FFC298ACC0000183E71900B1B416B5</div>
<div class="r" style="left:1092px;top:244px;width:423px;height:36px;border:1px dotted #e2e2e2"></div>
<div class="r" style="left:1093px;top:245px;width:421px;height:34px;border:1px solid #cccccc;border-radius:4px;background:#fff"></div>
<div class="t" style="left:963px;top:251.5px;font-size:14px;line-height:20px;color:#333;font-weight:normal;">单据</div>
<div class="t" style="left:1106px;top:251.5px;font-size:14px;line-height:20px;color:#555;font-weight:normal;">202007280005</div>
<div class="r" style="left:370px;top:285px;width:1158px;height:1px;border-top:1px dotted #d6d6d6"></div>
<div class="r" style="left:511px;top:292px;width:423px;height:36px;border:1px dotted #e2e2e2"></div>
<div class="r" style="left:512px;top:293px;width:421px;height:34px;border:1px solid #cccccc;border-radius:4px;background:#fff"></div>
<div class="t" style="left:382px;top:299.5px;font-size:14px;line-height:20px;color:#333;font-weight:normal;">采购人</div>
<div class="t" style="left:524.5px;top:299.5px;font-size:14px;line-height:20px;color:#555;font-weight:normal;">2600</div>
<div class="r" style="left:1092px;top:292px;width:423px;height:36px;border:1px dotted #e2e2e2"></div>
<div class="r" style="left:1093px;top:293px;width:421px;height:34px;border:1px solid #cccccc;border-radius:4px;background:#fff"></div>
<div class="t" style="left:963px;top:299.5px;font-size:14px;line-height:20px;color:#333;font-weight:normal;">采购人ID</div>
<div class="t" style="left:1106px;top:299.5px;font-size:14px;line-height:20px;color:#555;font-weight:normal;">21bab6a8-9777-4743-b0dc-e319bf6a8af4</div>
<div class="r" style="left:370px;top:333px;width:1158px;height:1px;border-top:1px dotted #d6d6d6"></div>
<div class="r" style="left:511px;top:340px;width:423px;height:36px;border:1px dotted #e2e2e2"></div>
<div class="r" style="left:512px;top:341px;width:421px;height:34px;border:1px solid #cccccc;border-radius:4px;background:#fff"></div>
<div class="t" style="left:382px;top:347.5px;font-size:14px;line-height:20px;color:#333;font-weight:normal;">采购部门</div>
<div class="t" style="left:524.5px;top:347.5px;font-size:14px;line-height:20px;color:#555;font-weight:normal;">/ces/研发部</div>
<div class="r" style="left:1092px;top:340px;width:423px;height:36px;border:1px dotted #e2e2e2"></div>
<div class="r" style="left:1093px;top:341px;width:421px;height:34px;border:1px solid #cccccc;border-radius:4px;background:#fff"></div>
<div class="t" style="left:963px;top:347.5px;font-size:14px;line-height:20px;color:#333;font-weight:normal;">采购部门ID</div>
<div class="t" style="left:1106px;top:347.5px;font-size:14px;line-height:20px;color:#555;font-weight:normal;">/f6f0a24d-c114-4098-9cef-82c55c38dbff.ogn</div>
<div class="r" style="left:370px;top:381px;width:1158px;height:1px;border-top:1px dotted #d6d6d6"></div>
<div class="r" style="left:511px;top:388px;width:423px;height:36px;border:1px dotted #e2e2e2"></div>
<div class="r" style="left:512px;top:389px;width:421px;height:34px;border:1px solid #cccccc;border-radius:4px;background:#fff"></div>
<div class="t" style="left:382px;top:395.5px;font-size:14px;line-height:20px;color:#333;font-weight:normal;">金额</div>
<div class="t" style="left:524.5px;top:395.5px;font-size:14px;line-height:20px;color:#555;font-weight:normal;">213</div>
<div class="r" style="left:1092px;top:388px;width:423px;height:36px;border:1px dotted #e2e2e2"></div>
<div class="r" style="left:1093px;top:389px;width:421px;height:34px;border:1px solid #cccccc;border-radius:4px;background:#fff"></div>
<div class="t" style="left:963px;top:395.5px;font-size:14px;line-height:20px;color:#333;font-weight:normal;">采购日期</div>
<div class="t" style="left:1106px;top:395.5px;font-size:14px;line-height:20px;color:#555;font-weight:normal;">2020-07-28</div>
<div class="r" style="left:370px;top:429px;width:1158px;height:1px;border-top:1px dotted #d6d6d6"></div>
<div class="r" style="left:511px;top:436px;width:423px;height:36px;border:1px dotted #e2e2e2"></div>
<div class="r" style="left:512px;top:437px;width:421px;height:34px;border:1px solid #cccccc;border-radius:4px;background:#fff"></div>
<div class="t" style="left:382px;top:443.5px;font-size:14px;line-height:20px;color:#333;font-weight:normal;">单据状态</div>
<div class="t" style="left:524.5px;top:443.5px;font-size:14px;line-height:20px;color:#555;font-weight:normal;"></div>
<div class="r" style="left:1092px;top:436px;width:423px;height:36px;border:1px dotted #e2e2e2"></div>
<div class="r" style="left:1093px;top:437px;width:421px;height:34px;border:1px solid #cccccc;border-radius:4px;background:#fff"></div>
<div class="t" style="left:963px;top:443.5px;font-size:14px;line-height:20px;color:#333;font-weight:normal;">审核时间</div>
<div class="t" style="left:1106px;top:443.5px;font-size:14px;line-height:20px;color:#555;font-weight:normal;"></div>
<div class="r" style="left:370px;top:477px;width:1158px;height:1px;border-top:1px dotted #d6d6d6"></div>
<div class="r" style="left:511px;top:484px;width:423px;height:36px;border:1px dotted #e2e2e2"></div>
<div class="r" style="left:512px;top:485px;width:421px;height:34px;border:1px solid #cccccc;border-radius:4px;background:#fff"></div>
<div class="t" style="left:382px;top:491.5px;font-size:14px;line-height:20px;color:#333;font-weight:normal;">审核意见</div>
<div class="t" style="left:524.5px;top:491.5px;font-size:14px;line-height:20px;color:#555;font-weight:normal;"></div>
<div class="r" style="left:370px;top:525px;width:1158px;height:1px;border-top:1px dotted #d6d6d6"></div>
<div class="r" style="left:947px;top:238px;width:1px;height:289px;border-left:1px dotted #d6d6d6"></div>
<div class="r" style="left:1525px;top:238px;width:1px;height:289px;border-left:1px dotted #d6d6d6"></div>
<div class="r" style="left:372px;top:221px;width:24px;height:24px;background:#efe7a9"></div>
<svg class="r" style="left:374px;top:222px" width="20" height="22" viewBox="374 222 20 22"><path d="M378.5 225.6 H389.5 V240.3 H386 L384.5 238.8 H381.5 L380 240.6 H378.5 Z" fill="#f4f6fc" stroke="#7d8aa4" stroke-width="0.9"/><path d="M384 228.4 H388 M384 232.5 H388 M384 236.5 H388" stroke="#5a6ea8" stroke-width="0.9"/><circle cx="381.4" cy="228.3" r="1.7" fill="#2a9a4a"/><circle cx="381.4" cy="232.5" r="1.7" fill="#2a9a4a"/><circle cx="381.4" cy="236.5" r="1.7" fill="#2a9a4a"/><path d="M377.2 229.5 H383.6 M377.2 236.5 H383.6" stroke="#222" stroke-width="0.9"/></svg>
<div class="r" style="left:376px;top:535px;width:1145px;height:41px;background:#f4f4f4;border-radius:4px"></div>
<div class="r" style="left:385px;top:544px;width:66px;height:25px;border:1px dotted #cfcfcf"></div>
<div class="t" style="left:386px;top:545.5px;font-size:16px;line-height:20px;color:#222;font-weight:bold;">采购明细</div>
<div class="r" style="left:375px;top:585px;width:1147px;height:133px;border:1px dotted #dedede"></div>
<svg class="r" style="left:389px;top:603px" width="11" height="11" viewBox="0 0 11 11"><path d="M5.2 0 V10.8 M0 5.4 H10.4" stroke="#3a7bc2" stroke-width="2"/></svg>
<div class="t" style="left:408px;top:599.0px;font-size:14px;line-height:20px;color:#3a7bc2;font-weight:normal;">添加</div>
<svg class="r" style="left:462px;top:607px" width="10" height="4" viewBox="0 0 10 4"><path d="M0 2.2 H10" stroke="#3a7bc2" stroke-width="2.2"/></svg>
<div class="t" style="left:481px;top:599.0px;font-size:14px;line-height:20px;color:#3a7bc2;font-weight:normal;">删除</div>
<svg class="r" style="left:536px;top:603px" width="13" height="12" viewBox="0 0 13 12"><path d="M9.3 3.2 A4.6 4.6 0 1 0 10.4 7.2" stroke="#3a7bc2" stroke-width="2" fill="none"/><path d="M7.4 4.4 L11.8 5.6 L11.6 1.2 Z" fill="#3a7bc2"/></svg>
<div class="t" style="left:557px;top:599.0px;font-size:14px;line-height:20px;color:#3a7bc2;font-weight:normal;">刷新</div>
<div class="r" style="left:375px;top:632px;width:1147px;height:2px;background:#d6d6d6"></div>
<div class="r" style="left:375px;top:639px;width:1147px;height:1px;border-top:1px dotted #dedede"></div>
<div class="r" style="left:391px;top:640px;width:831px;height:78px;border:1px solid #d4d4d4;border-top:2px solid #dcdcdc;border-bottom:2px solid #d0d0d0"></div>
<div class="r" style="left:392px;top:680px;width:829px;height:1px;background:#d4d4d4"></div>
<div class="r" style="left:446px;top:642px;width:1px;height:74px;background:#dcdcdc"></div>
<div class="r" style="left:601px;top:642px;width:1px;height:74px;background:#dcdcdc"></div>
<div class="r" style="left:756px;top:642px;width:1px;height:74px;background:#dcdcdc"></div>
<div class="r" style="left:911px;top:642px;width:1px;height:74px;background:#dcdcdc"></div>
<div class="r" style="left:1066px;top:642px;width:1px;height:74px;background:#dcdcdc"></div>
<div class="t" style="left:449.5px;top:651.3px;font-size:14px;line-height:20px;color:#222;font-weight:bold;">主键</div>
<div class="t" style="left:604px;top:651.3px;font-size:14px;line-height:20px;color:#222;font-weight:bold;">物品</div>
<div class="t" style="left:759px;top:651.3px;font-size:14px;line-height:20px;color:#222;font-weight:bold;">单价</div>
<div class="t" style="left:914px;top:651.3px;font-size:14px;line-height:20px;color:#222;font-weight:bold;">数量</div>
<div class="t" style="left:1069px;top:651.3px;font-size:14px;line-height:20px;color:#222;font-weight:bold;">采购主表</div>
<div class="r" style="left:446.5px;top:682px;width:154.0px;height:34px;border:1px solid #cfcfcf;border-radius:4px;box-shadow:inset 0 1px 1px rgba(0,0,0,0.06);background:#fff"></div>
<div class="r" style="left:601.5px;top:682px;width:154.0px;height:34px;border:1px solid #cfcfcf;border-radius:4px;box-shadow:inset 0 1px 1px rgba(0,0,0,0.06);background:#fff"></div>
<div class="r" style="left:756.5px;top:682px;width:154.0px;height:34px;border:1px solid #cfcfcf;border-radius:4px;box-shadow:inset 0 1px 1px rgba(0,0,0,0.06);background:#fff"></div>
<div class="r" style="left:911.5px;top:682px;width:154.0px;height:34px;border:1px solid #cfcfcf;border-radius:4px;box-shadow:inset 0 1px 1px rgba(0,0,0,0.06);background:#fff"></div>
<div class="r" style="left:1066.5px;top:682px;width:154.0px;height:34px;border:1px solid #cfcfcf;border-radius:4px;box-shadow:inset 0 1px 1px rgba(0,0,0,0.06);background:#fff"></div>
<div class="r" style="left:353px;top:906px;width:1190px;height:41px;background:#eff3fb"></div>
<div class="t" style="left:380.5px;top:920.5px;font-size:14px;line-height:20px;color:#222;font-weight:normal;">设计</div>
<div class="r" style="left:378px;top:943px;width:32px;height:2px;background:#f39800"></div>
<div class="r" style="left:434px;top:926px;width:1px;height:14px;background:#b8bcc4"></div>
<div class="r" style="left:515px;top:926px;width:1px;height:14px;background:#b8bcc4"></div>
<div class="r" style="left:596px;top:926px;width:1px;height:14px;background:#b8bcc4"></div>
<div class="t" style="left:461px;top:920.5px;font-size:14px;line-height:20px;color:#222;font-weight:normal;">源码</div>
<div class="t" style="left:550px;top:920.5px;font-size:14px;line-height:20px;color:#222;font-weight:normal;">js</div>
<div class="t" style="left:627px;top:920.5px;font-size:14px;line-height:20px;color:#222;font-weight:normal;">css</div>
<div class="r" style="left:1542px;top:62px;width:1px;height:885px;background:#d8dbe2"></div>
<svg class="r" style="left:1560px;top:73px" width="11" height="15" viewBox="0 0 11 15"><path d="M2 1.5 L8.5 7.5 L2 13.5" stroke="#3b6fe8" stroke-width="2" fill="none"/></svg>
<div class="r" style="left:1594px;top:70px;width:260px;height:28px;border:1px solid #dfe4ef;border-radius:3px;background:#fff"></div>
<div class="t" style="left:1607px;top:74.5px;font-size:14px;line-height:20px;color:#c3c7cf;font-weight:normal;">属性名称首字母或中文名</div>
<svg class="r" style="left:1830px;top:77px" width="15" height="15" viewBox="0 0 15 15"><circle cx="6.2" cy="6.2" r="5.3" stroke="#cdd0d6" stroke-width="1.3" fill="none"/><path d="M10 10 L14 14" stroke="#cdd0d6" stroke-width="1.4" stroke-linecap="round"/></svg>
<div class="r" style="left:1875px;top:70px;width:28px;height:28px;background:#5c9af8;border-radius:3px"></div>
<svg class="r" style="left:1882.5px;top:77.5px" width="14" height="14" viewBox="0 0 14 14"><path d="M4.92 2.47 L5.45 2.29 L5.49 0.53 L8.11 0.53 L8.15 2.29 L8.68 2.47 L9.17 2.71 L10.45 1.50 L12.30 3.35 L11.09 4.63 L11.33 5.12 L11.51 5.65 L13.27 5.69 L13.27 8.31 L11.51 8.35 L11.33 8.88 L11.09 9.37 L12.30 10.65 L10.45 12.50 L9.17 11.29 L8.68 11.53 L8.15 11.71 L8.11 13.47 L5.49 13.47 L5.45 11.71 L4.92 11.53 L4.43 11.29 L3.15 12.50 L1.30 10.65 L2.51 9.37 L2.27 8.88 L2.09 8.35 L0.33 8.31 L0.33 5.69 L2.09 5.65 L2.27 5.12 L2.51 4.63 L1.30 3.35 L3.15 1.50 L4.43 2.71 Z" fill="#fff"/><ellipse cx="6.8" cy="7" rx="2" ry="2.4" fill="#5c9af8"/></svg>
<div class="r" style="left:1543px;top:102px;width:368px;height:1px;background:#e0e5ee"></div>
<div class="t" style="left:1564px;top:111.0px;font-size:14px;line-height:20px;color:#222;font-weight:normal;">设置</div>
<div class="t" style="left:1634.5px;top:111.0px;font-size:14px;line-height:20px;color:#222;font-weight:normal;">基础</div>
<div class="t" style="left:1705px;top:111.0px;font-size:14px;line-height:20px;color:#222;font-weight:normal;">事件</div>
<div class="t" style="left:1775px;top:111.0px;font-size:14px;line-height:20px;color:#222;font-weight:normal;">样式</div>
<div class="r" style="left:1543px;top:135px;width:368px;height:1px;background:#e0e5ee"></div>
<div class="r" style="left:1544px;top:141px;width:364px;height:30px;background:#f3f5fa"></div>
<div class="t" style="left:1549px;top:145.9px;font-size:14px;line-height:20px;color:#4a4a4a;font-weight:bold;">设置</div>
<svg class="r" style="left:1888px;top:151.5px" width="15" height="9" viewBox="0 0 15 9"><path d="M1 1 L7.5 7.5 L14 1" stroke="#8a8f99" stroke-width="1.2" fill="none"/></svg>
<div class="r" style="left:1555px;top:182px;width:110px;height:37px;background:#eff3fb;border:1px solid #d3d9e3;border-radius:4px"></div>
<div class="t" style="left:1568px;top:189.5px;font-size:14px;line-height:20px;color:#333;font-weight:normal;">页面参数设置</div>
<div class="r" style="left:1544px;top:229px;width:364px;height:30px;background:#f3f5fa"></div>
<div class="t" style="left:1549px;top:233.9px;font-size:14px;line-height:20px;color:#4a4a4a;font-weight:bold;">基础</div>
<svg class="r" style="left:1888px;top:239.5px" width="15" height="9" viewBox="0 0 15 9"><path d="M1 1 L7.5 7.5 L14 1" stroke="#8a8f99" stroke-width="1.2" fill="none"/></svg>
<div class="t" style="left:1558px;top:276.5px;font-size:14px;line-height:20px;color:#555;font-weight:normal;">xid</div>
<div class="r" style="left:1644px;top:273px;width:254px;height:28px;border:1px solid #dde3ee;border-radius:3px;background:#fff"></div>
<div class="t" style="left:1653px;top:277.7px;font-size:15px;line-height:20px;color:#444;font-weight:normal;">window</div>
<div class="t" style="left:1558px;top:312.5px;font-size:14px;line-height:20px;color:#555;font-weight:normal;">显示名称</div>
<div class="r" style="left:1644px;top:309px;width:254px;height:28px;border:1px solid #dde3ee;border-radius:3px;background:#fff"></div>
<div class="t" style="left:1653px;top:313.7px;font-size:15px;line-height:20px;color:#444;font-weight:normal;">页面</div>
<div class="t" style="left:1558px;top:348.5px;font-size:14px;line-height:20px;color:#555;font-weight:normal;">页面URL</div>
<div class="r" style="left:1644px;top:345px;width:254px;height:28px;border:1px solid #dde3ee;border-radius:3px;background:#fff"></div>
<div class="t" style="left:1653px;top:349.7px;font-size:15px;line-height:20px;color:#444;font-weight:normal;">$UI/pc/xiangtong_sjzlc.w</div>
<div class="t" style="left:1558px;top:384.5px;font-size:14px;line-height:20px;color:#555;font-weight:normal;">页面标题</div>
<div class="r" style="left:1644px;top:381px;width:254px;height:28px;border:1px solid #dde3ee;border-radius:3px;background:#fff"></div>
<div class="r" style="left:1876px;top:382px;width:21px;height:26px;background:#eef2fa;border-left:1px solid #e2e7f0;border-radius:0 2px 2px 0"></div>
<svg class="r" style="left:1882px;top:392.5px" width="12" height="4" viewBox="0 0 12 4"><circle cx="1.7" cy="2" r="1.6" fill="#2a3550"/><circle cx="5.8" cy="2" r="1.6" fill="#2a3550"/><circle cx="9.9" cy="2" r="1.6" fill="#2a3550"/></svg>
<div class="t" style="left:1558px;top:420.5px;font-size:14px;line-height:20px;color:#555;font-weight:normal;">背景图片</div>
<div class="r" style="left:1644px;top:417px;width:254px;height:28px;border:1px solid #dde3ee;border-radius:3px;background:#fff"></div>
<div class="r" style="left:1876px;top:418px;width:21px;height:26px;background:#eef2fa;border-left:1px solid #e2e7f0;border-radius:0 2px 2px 0"></div>
<svg class="r" style="left:1882px;top:428.5px" width="12" height="4" viewBox="0 0 12 4"><circle cx="1.7" cy="2" r="1.6" fill="#2a3550"/><circle cx="5.8" cy="2" r="1.6" fill="#2a3550"/><circle cx="9.9" cy="2" r="1.6" fill="#2a3550"/></svg>
<div class="r" style="left:1544px;top:464px;width:364px;height:30px;background:#f3f5fa"></div>
<div class="t" style="left:1549px;top:468.9px;font-size:14px;line-height:20px;color:#4a4a4a;font-weight:bold;">样式</div>
<svg class="r" style="left:1888px;top:474.5px" width="15" height="9" viewBox="0 0 15 9"><path d="M1 1 L7.5 7.5 L14 1" stroke="#8a8f99" stroke-width="1.2" fill="none"/></svg>
<div class="t" style="left:1558px;top:503.5px;font-size:14px;line-height:20px;color:#555;font-weight:normal;">预定义样式</div>
<div class="r" style="left:1644px;top:504px;width:254px;height:28px;border:1px solid #dde3ee;border-radius:3px;background:#fff"></div>
<div class="t" style="left:1653px;top:508.70000000000005px;font-size:15px;line-height:20px;color:#444;font-weight:normal;">window</div>
<div class="t" style="left:1558px;top:536.5px;font-size:14px;line-height:20px;color:#555;font-weight:normal;">自定义样式</div>
<div class="r" style="left:1644px;top:537px;width:254px;height:28px;border:1px solid #dde3ee;border-radius:3px;background:#fff"></div>
<div class="r" style="left:1876px;top:538px;width:21px;height:26px;background:#eef2fa;border-left:1px solid #e2e7f0;border-radius:0 2px 2px 0"></div>
<svg class="r" style="left:1882px;top:548.5px" width="12" height="4" viewBox="0 0 12 4"><circle cx="1.7" cy="2" r="1.6" fill="#2a3550"/><circle cx="5.8" cy="2" r="1.6" fill="#2a3550"/><circle cx="9.9" cy="2" r="1.6" fill="#2a3550"/></svg>
<div class="t" style="left:1558px;top:577.0px;font-size:14px;line-height:20px;color:#4a86f0;font-weight:bold;">文字</div>
<svg class="r" style="left:1883px;top:582px" width="15" height="9" viewBox="0 0 15 9"><path d="M1 1 L7.5 7.5 L14 1" stroke="#6b9cf3" stroke-width="1.2" fill="none"/></svg>
<div class="r" style="left:1554px;top:601px;width:343px;height:1px;background:#dde3ee"></div>
<div class="t" style="left:1558px;top:612.5px;font-size:14px;line-height:20px;color:#555;font-weight:normal;">字体</div>
<div class="r" style="left:1644px;top:610px;width:254px;height:28px;border:1px solid #dde3ee;border-radius:3px;background:#fff"></div>
<svg class="r" style="left:1884.5px;top:622.5px" width="9" height="6" viewBox="0 0 9 6"><path d="M0 0.5 H9 L4.5 5.5 Z" fill="#1f2633"/></svg>
<div class="t" style="left:1558px;top:649.5px;font-size:14px;line-height:20px;color:#555;font-weight:normal;">大小</div>
<div class="r" style="left:1644px;top:646px;width:175px;height:28px;border:1px solid #dde3ee;border-radius:3px;background:#fff"></div>
<div class="r" style="left:1824px;top:648px;width:29px;height:28px;background:#eef2fb;border-radius:3px"></div>
<div class="r" style="left:1857px;top:648px;width:29px;height:28px;background:#eef2fb;border-radius:3px"></div>
<svg class="r" style="left:1828px;top:650px" width="20" height="20" viewBox="0 0 20 20"><text x="12.5" y="18" text-anchor="middle" font-family="Liberation Serif" font-weight="bold" font-size="19" fill="#2a3347">T</text><text x="5.5" y="18" text-anchor="middle" font-family="Liberation Serif" font-weight="bold" font-size="9" fill="#2a3347">T</text></svg>
<svg class="r" style="left:1861px;top:650px" width="20" height="20" viewBox="0 0 20 20"><text x="12" y="18" text-anchor="middle" font-family="Liberation Serif" font-weight="bold" font-size="16" fill="#2a3347">T</text><text x="6" y="18" text-anchor="middle" font-family="Liberation Serif" font-weight="bold" font-size="9" fill="#2a3347">T</text></svg>
<div class="t" style="left:1558px;top:688.5px;font-size:14px;line-height:20px;color:#555;font-weight:normal;">样式</div>
<div class="r" style="left:1644px;top:682px;width:28px;height:34px;background:#eef2fb;border-radius:3px"></div>
<svg class="r" style="left:1644px;top:685px" width="28" height="28" viewBox="0 0 28 28"><text x="14" y="19" text-anchor="middle" font-family="Liberation Serif" font-weight="bold" font-size="18" fill="#2a3347">B</text></svg>
<div class="r" style="left:1680px;top:682px;width:28px;height:34px;background:#eef2fb;border-radius:3px"></div>
<svg class="r" style="left:1680px;top:685px" width="28" height="28" viewBox="0 0 28 28"><text x="14" y="19" text-anchor="middle" font-family="Liberation Serif" font-style="italic" font-size="18" fill="#2a3347">I</text></svg>
<div class="r" style="left:1716px;top:682px;width:28px;height:34px;background:#eef2fb;border-radius:3px"></div>
<svg class="r" style="left:1716px;top:685px" width="28" height="28" viewBox="0 0 28 28"><text x="14" y="17" text-anchor="middle" font-family="Liberation Serif" font-size="14" fill="#2a3347">A</text><path d="M7 20 H21" stroke="#2a3347" stroke-width="1.6"/></svg>
<div class="r" style="left:1752px;top:682px;width:28px;height:34px;background:#eef2fb;border-radius:3px"></div>
<svg class="r" style="left:1752px;top:685px" width="28" height="28" viewBox="0 0 28 28"><text x="14" y="18" text-anchor="middle" font-family="Liberation Serif" font-size="13" fill="#2a3347">D</text><path d="M7.5 13.5 H20.5" stroke="#2a3347" stroke-width="1.2"/></svg>
<div class="r" style="left:1788px;top:682px;width:28px;height:34px;background:#eef2fb;border-radius:3px"></div>
<svg class="r" style="left:1788px;top:685px" width="28" height="28" viewBox="0 0 28 28"><path d="M7 7.8 H14.5 M7 11.8 H20 M7 15.8 H20 M7 19.5 H20" stroke="#2a3347" stroke-width="2"/></svg>
<div class="r" style="left:1824px;top:682px;width:28px;height:34px;background:#eef2fb;border-radius:3px"></div>
<svg class="r" style="left:1824px;top:685px" width="28" height="28" viewBox="0 0 28 28"><path d="M10 7.8 H18 M7 11.8 H21 M8.5 15.8 H19.5 M7 19.5 H21" stroke="#2a3347" stroke-width="2"/></svg>
<div class="r" style="left:1860px;top:682px;width:28px;height:34px;background:#eef2fb;border-radius:3px"></div>
<svg class="r" style="left:1860px;top:685px" width="28" height="28" viewBox="0 0 28 28"><path d="M13.5 7.8 H21 M8 11.8 H21 M8 15.8 H21 M7 19.5 H21" stroke="#2a3347" stroke-width="2"/></svg>
<div class="t" style="left:1558px;top:731.5px;font-size:14px;line-height:20px;color:#555;font-weight:normal;">颜色</div>
<div class="r" style="left:1644px;top:726px;width:184px;height:28px;border:1px solid #dde3ee;border-radius:3px;background:#fff"></div>
<div class="r" style="left:1830px;top:726px;width:58px;height:28px;border:1px solid #dde3ee;background:#fff"></div>
<svg class="r" style="left:1834px;top:731px" width="30" height="18" viewBox="0 0 30 18"><rect x="0" y="0" width="6" height="6" fill="#ccc"/><rect x="12" y="0" width="6" height="6" fill="#ccc"/><rect x="24" y="0" width="6" height="6" fill="#ccc"/><rect x="6" y="6" width="6" height="6" fill="#ccc"/><rect x="18" y="6" width="6" height="6" fill="#ccc"/><rect x="0" y="12" width="6" height="6" fill="#ccc"/><rect x="12" y="12" width="6" height="6" fill="#ccc"/><rect x="24" y="12" width="6" height="6" fill="#ccc"/></svg>
<svg class="r" style="left:1874px;top:738px" width="9" height="6" viewBox="0 0 9 6"><path d="M0 0.5 H9 L4.5 5.5 Z" fill="#1f2633"/></svg>
<div class="t" style="left:1558px;top:770.5px;font-size:14px;line-height:20px;color:#555;font-weight:normal;">空白符处理</div>
<div class="r" style="left:1644px;top:767px;width:254px;height:28px;border:1px solid #dde3ee;border-radius:3px;background:#fff"></div>
<svg class="r" style="left:1884.5px;top:780px" width="9" height="6" viewBox="0 0 9 6"><path d="M0 0.5 H9 L4.5 5.5 Z" fill="#1f2633"/></svg>
<div class="t" style="left:1558px;top:806.5px;font-size:14px;line-height:20px;color:#555;font-weight:normal;">强制换行</div>
<div class="r" style="left:1644px;top:803px;width:254px;height:28px;border:1px solid #dde3ee;border-radius:3px;background:#fff"></div>
<svg class="r" style="left:1884.5px;top:816px" width="9" height="6" viewBox="0 0 9 6"><path d="M0 0.5 H9 L4.5 5.5 Z" fill="#1f2633"/></svg>
<div class="t" style="left:1558px;top:842.5px;font-size:14px;line-height:20px;color:#555;font-weight:normal;">文字间距</div>
<div class="r" style="left:1644px;top:839px;width:184px;height:28px;border:1px solid #dde3ee;border-radius:3px;background:#fff"></div>
<div class="r" style="left:1777px;top:840px;width:1px;height:26px;background:#dde3ee"></div>
<div class="t" style="left:1782px;top:843.5px;font-size:15px;line-height:20px;color:#555;font-weight:normal;">px</div>
<svg class="r" style="left:1814px;top:849.5px" width="9" height="6" viewBox="0 0 9 6"><path d="M0 0.5 H9 L4.5 5.5 Z" fill="#1f2633"/></svg>
<div class="r" style="left:1830px;top:839px;width:28px;height:27px;background:#eef2fb;border-radius:3px"></div>
<div class="t" style="left:1840px;top:843.0px;font-size:14px;line-height:20px;color:#333;font-weight:normal;">+</div>
<div class="r" style="left:1860px;top:839px;width:28px;height:27px;background:#eef2fb;border-radius:3px"></div>
<div class="t" style="left:1870px;top:843.0px;font-size:14px;line-height:20px;color:#333;font-weight:normal;">-</div>
<div class="t" style="left:1558px;top:882.5px;font-size:14px;line-height:20px;color:#4a86f0;font-weight:bold;">边框</div>
<svg class="r" style="left:1884px;top:887px" width="15" height="9" viewBox="0 0 15 9"><path d="M1 1 L7.5 7.5 L14 1" stroke="#6b9cf3" stroke-width="1.2" fill="none"/></svg>
<div class="r" style="left:1554px;top:907px;width:344px;height:1px;background:#dde3ee"></div>
<div class="t" style="left:1558px;top:934.5px;font-size:14px;line-height:20px;color:#555;font-weight:normal;">样式</div>
<div class="r" style="left:1609px;top:926px;width:28px;height:34px;background:#eef2fb;border-radius:3px"></div>
<div class="r" style="left:1652px;top:926px;width:28px;height:34px;background:#eef2fb;border-radius:3px"></div>
<div class="r" style="left:1695px;top:926px;width:28px;height:34px;background:#eef2fb;border-radius:3px"></div>
<div class="r" style="left:1738px;top:926px;width:28px;height:34px;background:#eef2fb;border-radius:3px"></div>
<div class="t" style="left:1619px;top:930.5px;font-size:13px;line-height:20px;color:#333;font-weight:normal;">×</div>
<div class="r" style="left:1659px;top:939.5px;width:14px;height:1.5px;background:#333"></div>
<div class="t" style="left:1702px;top:928.5px;font-size:13px;line-height:20px;color:#3a4560;font-weight:normal;letter-spacing:0.8px">---</div>
<svg class="r" style="left:1745px;top:937px" width="16" height="5" viewBox="0 0 16 5"><circle cx="2.5" cy="2.5" r="2" fill="#333"/><circle cx="8" cy="2.5" r="2" fill="#333"/><circle cx="13.5" cy="2.5" r="2" fill="#333"/></svg>
<div class="r" style="left:1822px;top:939px;width:20px;height:21px;background:#eef2fb;border-radius:3px"></div>
<div class="r" style="left:1908.5px;top:140px;width:2.5px;height:470px;background:#b4b4b4;border-radius:2px"></div>
<svg class="r" style="left:1489px;top:897px" width="52" height="52" viewBox="0 0 52 52"><circle cx="26" cy="26" r="24" fill="#eceef2" stroke="#2b8af7" stroke-width="2.2"/><clipPath id="av"><circle cx="26" cy="26" r="23"/></clipPath><g clip-path="url(#av)"><path d="M8 52 V27 C8 16 16 10 26 10 C36 10 43 16 43 27 V52 Z" fill="#c9cdd4"/><ellipse cx="20" cy="23" rx="3.6" ry="4.2" fill="#fff"/><ellipse cx="31" cy="23" rx="3.6" ry="4.2" fill="#fff"/><circle cx="19.3" cy="23" r="1.2" fill="#7a8089"/><path d="M28.8 23.6 Q31 21.4 33.2 23.6" stroke="#7a8089" stroke-width="1" fill="none"/><ellipse cx="25.5" cy="31.5" rx="10.5" ry="2.8" fill="#fff"/><path d="M5 37 Q26 33 47 37 L46 45 H6 Z" fill="#aeb4bd"/><rect x="15" y="44" width="5.5" height="10" fill="#aeb4bd"/><rect x="21.5" y="45" width="13" height="9" fill="#fff"/></g></svg></body></html>
